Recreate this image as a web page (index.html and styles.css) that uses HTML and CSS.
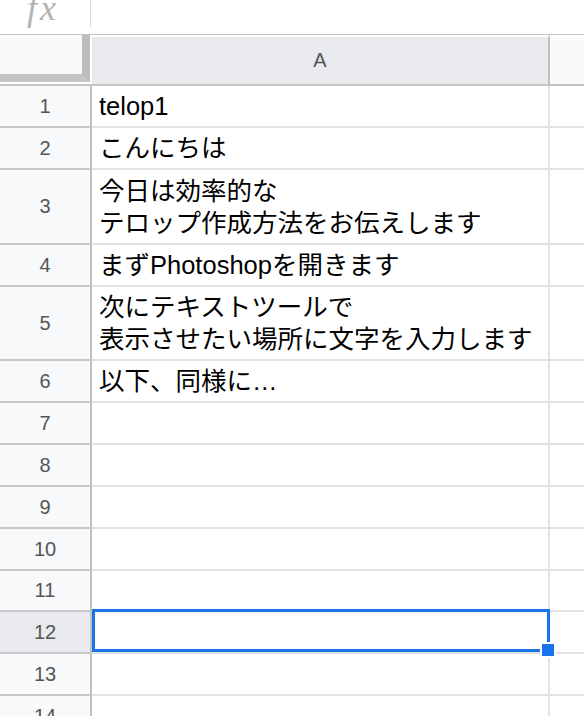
FILE: index.html
```html
<!DOCTYPE html>
<html lang="ja">
<head>
<meta charset="utf-8">
<title>Sheet</title>
<link rel="stylesheet" href="styles.css">
</head>
<body>
<div class="sheet">
  <div class="formula-bar">
    <div class="fx-box"><span class="fx">fx</span></div>
    <div class="fx-divider"></div>
  </div>
  <div class="grid">
    <div class="corner"><div class="corner-inner"></div></div>
    <div class="colhead colhead-a">A</div>
    <div class="colhead colhead-b"></div>

    <div class="rh">1</div><div class="cell"><div class="txt">telop1</div></div><div class="cellb"></div>
    <div class="rh">2</div><div class="cell"><div class="txt">こんにちは</div></div><div class="cellb"></div>
    <div class="rh">3</div><div class="cell"><div class="txt">今日は効率的な<br>テロップ作成方法をお伝えします</div></div><div class="cellb"></div>
    <div class="rh">4</div><div class="cell"><div class="txt">まずPhotoshopを開きます</div></div><div class="cellb"></div>
    <div class="rh">5</div><div class="cell"><div class="txt">次にテキストツールで<br>表示させたい場所に文字を入力します</div></div><div class="cellb"></div>
    <div class="rh">6</div><div class="cell"><div class="txt">以下、同様に…</div></div><div class="cellb"></div>
    <div class="rh">7</div><div class="cell"></div><div class="cellb"></div>
    <div class="rh">8</div><div class="cell"></div><div class="cellb"></div>
    <div class="rh">9</div><div class="cell"></div><div class="cellb"></div>
    <div class="rh">10</div><div class="cell"></div><div class="cellb"></div>
    <div class="rh">11</div><div class="cell"></div><div class="cellb"></div>
    <div class="rh rh-selected">12</div><div class="cell cell-selected"><div class="selection"></div><div class="handle"></div></div><div class="cellb"></div>
    <div class="rh">13</div><div class="cell"></div><div class="cellb"></div>
    <div class="rh">14</div><div class="cell"></div><div class="cellb"></div>
  </div>
</div>
</body>
</html>
```
FILE: styles.css
```css
html, body {
  margin: 0;
  padding: 0;
  background: #ffffff;
}

body {
  width: 584px;
  height: 716px;
  overflow: hidden;
  font-family: "Liberation Sans", Arial, "Noto Sans CJK JP", sans-serif;
}

.sheet {
  width: 584px;
  height: 716px;
  overflow: hidden;
}

.formula-bar {
  display: flex;
  align-items: flex-start;
  height: 34px;
  border-bottom: 1px solid #c4c4c4;
}

.fx-box {
  width: 90px;
  height: 34px;
  padding-left: 27px;
  box-sizing: border-box;
  overflow: hidden;
}

.fx {
  display: block;
  font-family: "Liberation Serif", "DejaVu Serif", serif;
  font-style: italic;
  font-size: 36px;
  line-height: 16px;
  letter-spacing: 3px;
  color: #b3b3b3;
}

.fx-divider {
  width: 1px;
  height: 27px;
  background: #dadada;
}

.grid {
  display: grid;
  grid-template-columns: 92px 458px 1fr;
  grid-template-rows: 51px 42px 42px 75px 42px 74px 42px 42px 42px 42px 42px 41px 42px 42px 42px;
}

.corner {
  background: #ffffff;
  border-bottom: 2px solid #c4c4c4;
  box-sizing: border-box;
}

.corner-inner {
  width: 90px;
  height: 47px;
  box-sizing: border-box;
  background: #f8f9fa;
  border-right: 8px solid #bdbdbd;
  border-bottom: 8px solid #c4c4c4;
}

.colhead {
  display: flex;
  align-items: center;
  justify-content: center;
  box-sizing: border-box;
  border-top: 2px solid #ffffff;
  border-bottom: 2px solid #c4c4c4;
  font-size: 20px;
  color: #555555;
}

.colhead-a {
  background: #e8eaed;
  border-right: 2px solid #c0c0c0;
}

.colhead-b {
  background: #f8f9fa;
}

.rh {
  display: flex;
  align-items: center;
  justify-content: center;
  box-sizing: border-box;
  background: #f8f9fa;
  border-right: 2px solid #c0c0c0;
  border-bottom: 2px solid #c8c8c8;
  font-size: 20px;
  color: #555555;
}

.rh-selected {
  background: #e8eaed;
}

.cell {
  display: flex;
  align-items: flex-end;
  box-sizing: border-box;
  padding: 0 6px 4px 7px;
  border-right: 2px solid #e2e2e2;
  border-bottom: 2px solid #e2e2e2;
  font-size: 25.5px;
  line-height: 32px;
  color: #000000;
  white-space: nowrap;
  overflow: hidden;
}

.cellb {
  box-sizing: border-box;
  border-bottom: 2px solid #e2e2e2;
}

.cell-selected {
  position: relative;
  overflow: visible;
}

.selection {
  position: absolute;
  left: 0;
  top: -3px;
  width: 458px;
  height: 43px;
  box-sizing: border-box;
  border: 3px solid #1a73e8;
}

.handle {
  position: absolute;
  left: 448px;
  top: 30px;
  width: 16px;
  height: 16px;
  box-sizing: border-box;
  background: #1a73e8;
  border: 2px solid #ffffff;
}
```
